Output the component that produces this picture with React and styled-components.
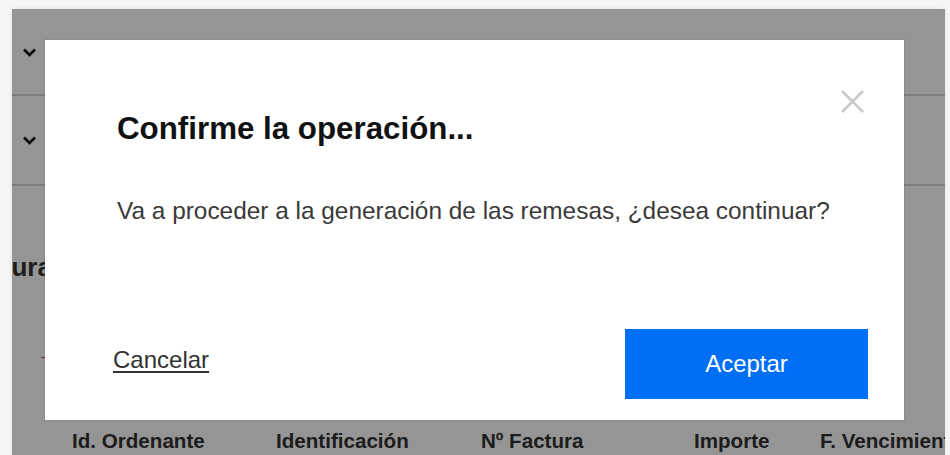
import React from "react";
import styled, { createGlobalStyle } from "styled-components";

const GlobalStyle = createGlobalStyle`
  html, body {
    margin: 0;
    padding: 0;
    background: #f6f6f6;
    font-family: "Liberation Sans", Arial, sans-serif;
  }
`;

export const Frame = styled.div`
  position: relative;
  margin: 9px 5px 0 12px;
  height: 446px;
  overflow: hidden;
  background: #ffffff;
  box-shadow: 0 0 6px rgba(0, 0, 0, 0.08);
`;

export const Page = styled.div`
  display: flex;
  flex-direction: column;
`;

export const Row = styled.div`
  display: flex;
  align-items: center;
  height: ${(p) => p.h}px;
  border-bottom: 2px solid #d6d6d6;
  padding-left: 10px;
`;

export const Chevron = styled.svg`
  width: 15px;
  height: 10px;
`;

export const Heading = styled.h2`
  margin: 66px 0 0 -54px;
  font-size: 26px;
  font-weight: bold;
  color: #333;
`;

export const Mark = styled.div`
  width: 5px;
  height: 1px;
  margin: 74px 0 0 29px;
  background: #b04a60;
`;

export const TableHead = styled.div`
  display: grid;
  grid-template-columns: 204px 205px 213px 126px 1fr;
  margin-top: 71px;
  padding-left: 60px;
  font-size: 20.6px;
  font-weight: bold;
  color: #333;
  white-space: nowrap;
`;

export const Overlay = styled.div`
  position: absolute;
  inset: 0;
  background: rgba(0, 0, 0, 0.415);
  padding: 31px 41px 0 33px;
`;

export const Modal = styled.div`
  position: relative;
  display: flex;
  flex-direction: column;
  width: 859px;
  height: 380px;
  box-sizing: border-box;
  background: #ffffff;
  box-shadow: 0 0 2px rgba(0, 0, 0, 0.2);
  padding: 70px 36px 21px 72px;
`;

export const Close = styled.button`
  position: absolute;
  top: 50px;
  right: 39px;
  width: 25px;
  height: 23px;
  padding: 0;
  border: none;
  background: none;
  cursor: pointer;
  svg {
    display: block;
  }
`;

export const Title = styled.h3`
  margin: 0;
  font-size: 31.3px;
  line-height: 37px;
  font-weight: bold;
  color: #111;
`;

export const Message = styled.p`
  margin: 49px 0 0;
  font-size: 24.4px;
  line-height: 29px;
  color: #3a3a3a;
`;

export const Footer = styled.div`
  display: flex;
  align-items: center;
  justify-content: space-between;
  margin-top: auto;
  margin-left: -4px;
`;

export const CancelLink = styled.a`
  font-size: 24px;
  color: #333;
  text-decoration: underline;
  text-underline-offset: 3px;
  margin-top: -8px;
  cursor: pointer;
`;

export const AcceptButton = styled.button`
  width: 243px;
  height: 70px;
  border: none;
  background: #006ff8;
  color: #ffffff;
  font-family: inherit;
  font-size: 24px;
  cursor: pointer;
`;

const columns = ["Id. Ordenante", "Identificación", "Nº Factura", "Importe", "F. Vencimiento"];

function ChevronDown() {
  return (
    <Chevron viewBox="0 0 15 10">
      <path d="M2 2.5 L7.5 8 L13 2.5" fill="none" stroke="#111" strokeWidth="2.6" />
    </Chevron>
  );
}

export default function App() {
  return (
    <>
      <GlobalStyle />
      <Frame>
        <Page>
          <Row h={85}>
            <ChevronDown />
          </Row>
          <Row h={88}>
            <ChevronDown />
          </Row>
          <Heading>Facturas</Heading>
          <Mark />
          <TableHead>
            {columns.map((c) => (
              <span key={c}>{c}</span>
            ))}
          </TableHead>
        </Page>
        <Overlay>
          <Modal>
            <Close aria-label="Cerrar">
              <svg width="25" height="23" viewBox="0 0 25 23">
                <path d="M2 1 L23 22 M23 1 L2 22" stroke="#c9c9c9" strokeWidth="2.6" />
              </svg>
            </Close>
            <Title>Confirme la operación...</Title>
            <Message>Va a proceder a la generación de las remesas, ¿desea continuar?</Message>
            <Footer>
              <CancelLink>Cancelar</CancelLink>
              <AcceptButton>Aceptar</AcceptButton>
            </Footer>
          </Modal>
        </Overlay>
      </Frame>
    </>
  );
}
